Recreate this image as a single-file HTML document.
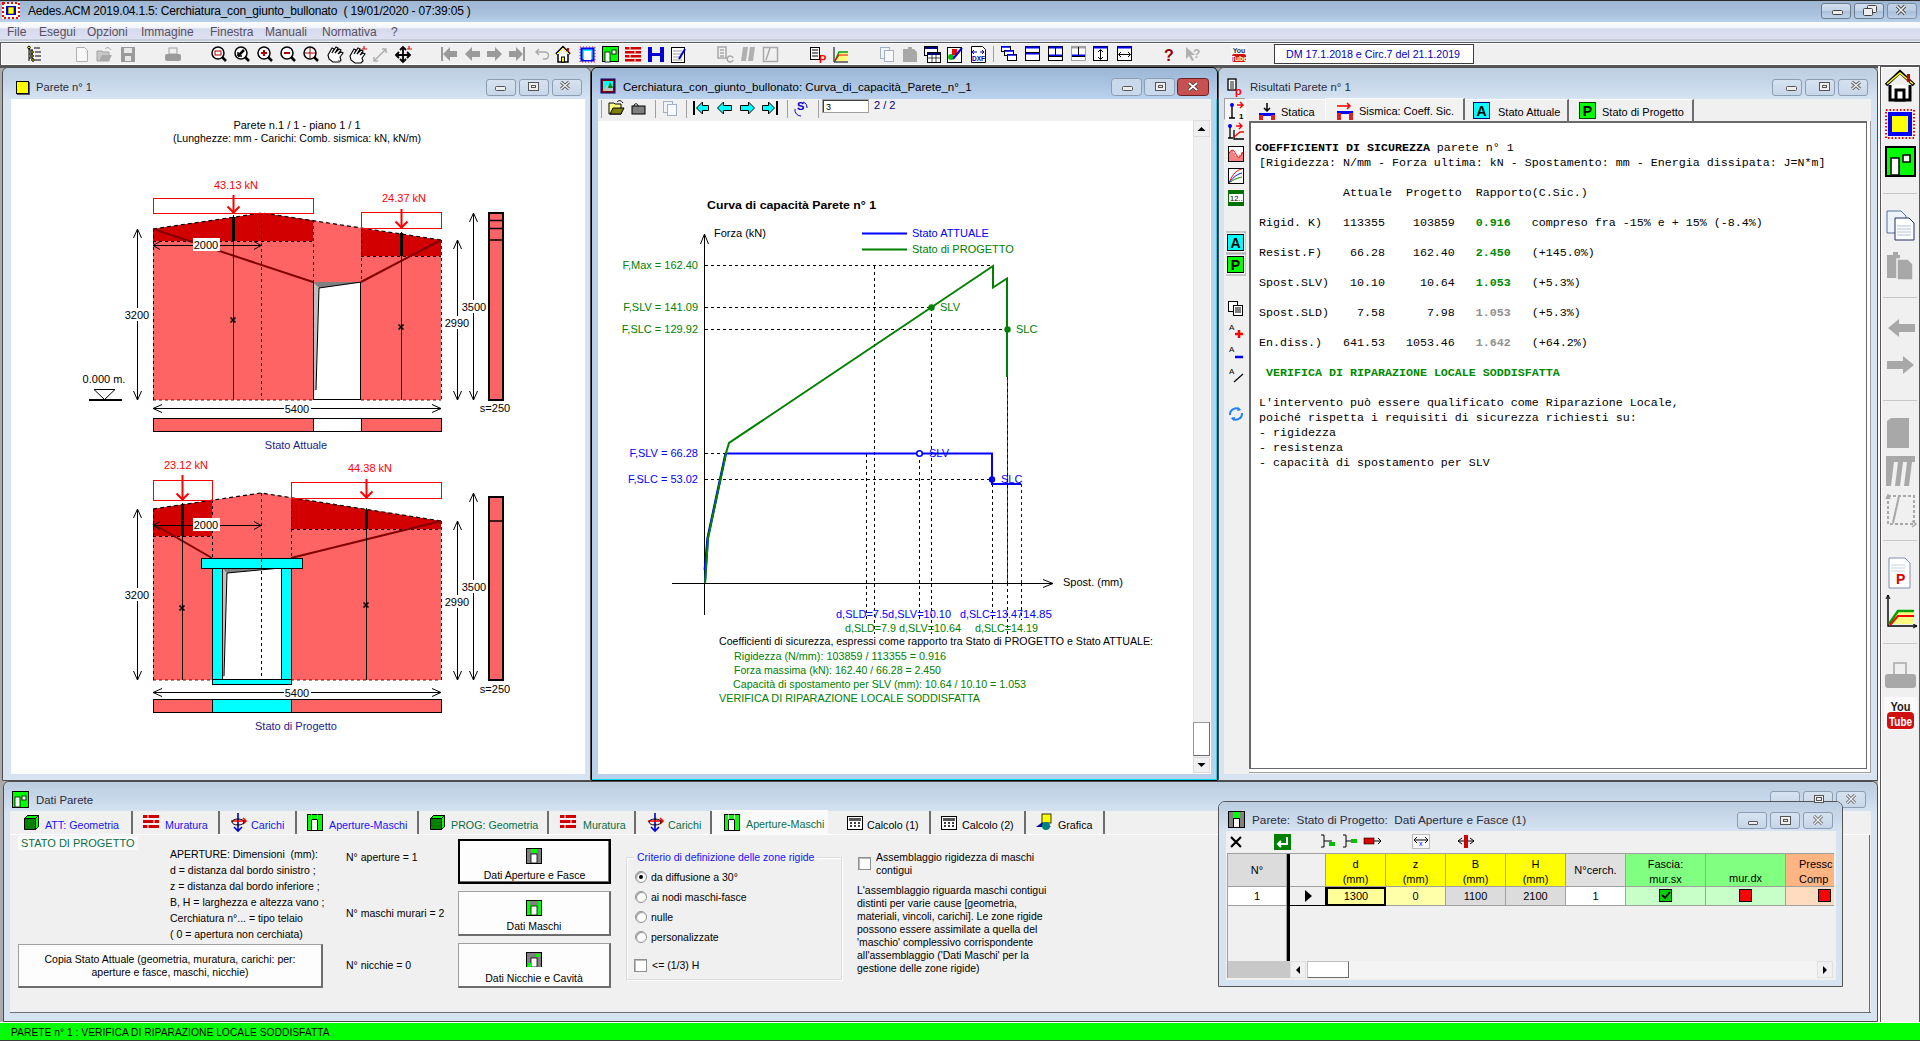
<!DOCTYPE html>
<html><head><meta charset="utf-8">
<style>
*{box-sizing:border-box;margin:0;padding:0}
html,body{width:1920px;height:1041px;overflow:hidden;background:#ababab;font-family:"Liberation Sans",sans-serif;font-size:12px;color:#000}
.a{position:absolute}
.t{position:absolute;white-space:pre;line-height:1}
#title{left:0;top:0;width:1920px;height:22px;background:linear-gradient(#9fb6d3,#a9c1dc 60%,#b9d0ea);border-top:1px solid #2a2a2a}
#menu{left:0;top:22px;width:1920px;height:20px;background:linear-gradient(#fdfdfe 0,#f3f5fa 30%,#d5d9ec 36%,#dfe3f3 100%);border-bottom:1px solid #e8ecf4;box-shadow:inset 0 -2px 0 #c6cbd8}
#tb{left:0;top:42px;width:1920px;height:26px;background:#f0f0f0;border-top:1px solid #5a5a5a;border-left:1px solid #5a5a5a;border-bottom:3px solid #555;box-shadow:inset 1px 1px 0 #fff,inset 0 -1px 0 #fff}
.wbtn{position:absolute;height:16px;border:1px solid #6c7a8e;border-radius:3px;background:linear-gradient(#d3dfee,#c1d2e6 50%,#a9bfda 51%,#c0d3ea)}
.win{position:absolute;background:#d6e3f1;border:1px solid #4d4d4d;border-radius:6px 6px 0 0}
.win .tt{position:absolute;left:0;top:0;right:0;height:31px;border-radius:6px 6px 0 0;background:linear-gradient(#bccde0,#c7d7ea 50%,#d5e3f2)}
.cbtn{position:absolute;width:30px;height:17px;border:1px solid #8c9cb2;border-radius:3px;background:linear-gradient(#d6e2ef,#c7d6e8)}
#status{left:0;top:1022px;width:1920px;height:19px;background:#00ff00;border-top:1px solid #fff;border-bottom:1px solid #3c3c3c}
#rtb{left:1878px;top:66px;width:42px;height:956px;background:#f0f0f0;border-left:2px solid #fff;border-right:1px solid #555;box-shadow:inset 1px 1px 0 #555,inset 2px 2px 0 #fff}
.ttl{font-size:12px;color:#2b2b3b}
</style></head>
<body>
<!-- main title bar -->
<div id="title" class="a">
  <div class="t" style="left:28px;top:4px;font-size:12px;letter-spacing:-0.2px;color:#000">Aedes.ACM 2019.04.1.5: Cerchiatura_con_giunto_bullonato  ( 19/01/2020 - 07:39:05 )</div>
  <div class="wbtn" style="left:1821px;top:2px;width:30px"></div>
  <div class="wbtn" style="left:1854px;top:2px;width:30px"></div>
  <div class="wbtn" style="left:1887px;top:2px;width:30px;opacity:.7"></div>
</div>
<!-- menu -->
<div id="menu" class="a">
  <div class="t" style="left:7px;top:4px;color:#5a5060">File</div>
  <div class="t" style="left:39px;top:4px;color:#5a5060">Esegui</div>
  <div class="t" style="left:87px;top:4px;color:#5a5060">Opzioni</div>
  <div class="t" style="left:141px;top:4px;color:#5a5060">Immagine</div>
  <div class="t" style="left:210px;top:4px;color:#5a5060">Finestra</div>
  <div class="t" style="left:265px;top:4px;color:#5a5060">Manuali</div>
  <div class="t" style="left:322px;top:4px;color:#5a5060">Normativa</div>
  <div class="t" style="left:391px;top:4px;color:#5a5060">?</div>
</div>
<!-- toolbar -->
<div id="tb" class="a"></div>

<!-- window 1: Parete -->
<div class="win" style="left:2px;top:67px;width:589px;height:714px">
  <div class="tt"></div>
  <div class="a" style="left:13px;top:13px;width:13px;height:13px;background:#ff0;border:1px solid #000;box-shadow:1px 1px 0 #555"></div>
  <div class="t ttl" style="left:33px;top:14px;font-size:11.2px">Parete n° 1</div>
  <div class="cbtn" style="left:483px;top:11px"></div>
  <div class="cbtn" style="left:516px;top:11px"></div>
  <div class="cbtn" style="left:549px;top:11px"></div>
  <div class="a" style="left:8px;top:31px;width:574px;height:675px;background:#fff"></div>
</div>

<!-- window 2: chart -->
<div class="win" style="left:591px;top:67px;width:627px;height:714px;background:#b9d1ea;border-color:#000;box-shadow:inset -1px -1px 0 #00e0ff">
  <div class="tt" style="background:linear-gradient(#9cb6d6,#a9c3e2 50%,#bcd3ee)"></div>
  <div class="t ttl" style="left:31px;top:14px;color:#000;font-size:11.55px">Cerchiatura_con_giunto_bullonato: Curva_di_capacità_Parete_n°_1</div>
  <div class="a" style="left:6px;top:31px;width:613px;height:22px;background:#f0f0f0"></div>
  <div class="a" style="left:6px;top:53px;width:613px;height:653px;background:#fff"></div>
</div>

<!-- window 3: Risultati -->
<div class="win" style="left:1218px;top:67px;width:660px;height:714px">
  <div class="tt"></div>
  <div class="t ttl" style="left:31px;top:14px;font-size:11.4px">Risultati Parete n° 1</div>
  <div class="cbtn" style="left:553px;top:11px"></div>
  <div class="cbtn" style="left:586px;top:11px"></div>
  <div class="cbtn" style="left:619px;top:11px"></div>
  <div class="a" style="left:6px;top:31px;width:646px;height:675px;background:#f0f0f0"></div>
  <div class="a" style="left:32px;top:55px;width:616px;height:650px;background:#fff;border:1px solid #6d6d6d"></div>
</div>

<!-- window 4: Dati Parete -->
<div class="win" style="left:3px;top:781px;width:1875px;height:241px">
  <div class="tt" style="height:30px"></div>
  <div class="t ttl" style="left:32px;top:13px;font-size:11.4px">Dati Parete</div>
  <div class="a" style="left:6px;top:29px;width:1861px;height:202px;background:#f0f0f0;border-bottom:1px solid #6d6d6d"></div>
</div>

<svg class="a" style="left:0;top:0" width="1920" height="1041" viewBox="0 0 1920 1041" font-family="Liberation Sans" font-size="11">
<g text-anchor="middle">
<text x="297" y="129">Parete n.1 / 1 - piano 1 / 1</text>
<text x="297" y="142" textLength="248" lengthAdjust="spacingAndGlyphs">(Lunghezze: mm - Carichi: Comb. sismica: kN, kN/m)</text>
</g>
<!-- ===== TOP: Stato Attuale ===== -->
<g>
<!-- wall body pink -->
<polygon points="153,229 262,213 441,240 441,400 361,400 361,282 313,282 313,400 153,400" fill="#ff6464"/>
<!-- opening -->
<rect x="313" y="282" width="48" height="118" fill="#fff"/>
<polygon points="313,282 361,282 360,283 319,288 316,390 313,392" fill="#c0c0c0"/>
<polygon points="313,282 361,282 319,288" fill="#808080"/>
<polyline points="361,282 319,288 316,390" fill="none" stroke="#000" stroke-width="1"/>
<line x1="313.5" y1="282" x2="313.5" y2="400" stroke="#000"/>
<line x1="360.5" y1="282" x2="360.5" y2="400" stroke="#000"/>
<line x1="313" y1="399.5" x2="361" y2="399.5" stroke="#000"/>
<!-- dark red bands -->
<polygon points="153,229 262,213 313,220.6 313,241 153,241" fill="#d20000"/>
<polygon points="361,228.5 441,240 441,256 361,256" fill="#d20000"/>
<!-- roof dashed -->
<polyline points="153,229 262,213 441,240" fill="none" stroke="#000" stroke-width="1.2" stroke-dasharray="4,3"/>
<!-- dashed lines -->
<g stroke="#000" stroke-width="1" stroke-dasharray="3,3" fill="none">
<line x1="153.5" y1="229" x2="153.5" y2="400"/>
<line x1="261.5" y1="213" x2="261.5" y2="400"/>
<line x1="313.5" y1="220" x2="313.5" y2="282"/>
<line x1="361.5" y1="228" x2="361.5" y2="282"/>
<line x1="441.5" y1="240" x2="441.5" y2="400"/>
<line x1="153" y1="241.5" x2="313" y2="241.5"/>
<line x1="361" y1="256.5" x2="441" y2="256.5"/>
<line x1="153" y1="400" x2="313" y2="400" stroke="#800000"/>
<line x1="361" y1="400" x2="441" y2="400" stroke="#800000"/>
</g>
<!-- diagonals -->
<line x1="153" y1="229" x2="313" y2="282" stroke="#800000" stroke-width="2"/>
<line x1="361" y1="282" x2="441" y2="240" stroke="#800000" stroke-width="2"/>
<!-- pier axes -->
<line x1="233.5" y1="215" x2="233.5" y2="400" stroke="#000"/>
<line x1="233.5" y1="217" x2="233.5" y2="241" stroke="#000" stroke-width="3"/>
<line x1="401.5" y1="232" x2="401.5" y2="400" stroke="#000"/>
<line x1="401.5" y1="233" x2="401.5" y2="256" stroke="#000" stroke-width="3"/>
<g stroke="#000" stroke-width="1.6"><path d="M230.5,317.5l5,5m0,-5l-5,5"/><path d="M398.5,324.5l5,5m0,-5l-5,5"/></g>
<!-- loads -->
<rect x="153.5" y="198.5" width="160" height="15" fill="none" stroke="#ff0000"/>
<rect x="361.5" y="212.5" width="80" height="16" fill="none" stroke="#ff0000"/>
<g stroke="#ff0000" stroke-width="2" fill="none">
<line x1="233.5" y1="195" x2="233.5" y2="213"/><path d="M227.5,206.5l6,6l6,-6"/>
<line x1="401.5" y1="209" x2="401.5" y2="228"/><path d="M395.5,221.5l6,6l6,-6"/>
</g>
<text x="236" y="189" fill="#ff0000" text-anchor="middle">43.13 kN</text>
<text x="404" y="202" fill="#ff0000" text-anchor="middle">24.37 kN</text>
<!-- dim 2000 -->
<g stroke="#000" fill="none"><line x1="153" y1="245.5" x2="261" y2="245.5"/><path d="M160,241.5l-7,4l7,4M254,241.5l7,4l-7,4"/></g>
<rect x="193" y="238" width="27" height="13" fill="#fff"/>
<text x="206" y="249" text-anchor="middle">2000</text>
<!-- vertical dims -->
<g stroke="#000" fill="none">
<line x1="137.5" y1="229" x2="137.5" y2="400"/><path d="M133.5,238l4,-9l4,9M133.5,391l4,9l4,-9"/>
<line x1="457.5" y1="240" x2="457.5" y2="400"/><path d="M453.5,249l4,-9l4,9M453.5,391l4,9l4,-9"/>
<line x1="473.5" y1="213" x2="473.5" y2="400"/><path d="M469.5,222l4,-9l4,9M469.5,391l4,9l4,-9"/>
</g>
<rect x="124" y="308" width="26" height="13" fill="#fff"/>
<text x="137" y="319" text-anchor="middle">3200</text>
<rect x="444" y="316" width="27" height="13" fill="#fff"/>
<text x="457" y="327" text-anchor="middle">2990</text>
<rect x="461" y="300" width="26" height="13" fill="#fff"/>
<text x="474" y="311" text-anchor="middle">3500</text>
<!-- side section -->
<rect x="489" y="213" width="14" height="187" fill="#ff6464" stroke="#000" stroke-width="2"/>
<g stroke="#000" stroke-width="1.5"><line x1="489" y1="220.5" x2="503" y2="220.5"/><line x1="489" y1="228.5" x2="503" y2="228.5"/><line x1="489" y1="240" x2="503" y2="240"/></g>
<text x="495" y="412" text-anchor="middle">s=250</text>
<!-- ground -->
<text x="104" y="383" text-anchor="middle">0.000 m.</text>
<path d="M94,389.5h21l-10.5,10z" fill="none" stroke="#000"/>
<line x1="89" y1="400" x2="122" y2="400" stroke="#000" stroke-width="2"/>
<!-- dim 5400 -->
<g stroke="#000" fill="none"><line x1="153" y1="408.5" x2="441" y2="408.5"/><path d="M162,404.5l-9,4l9,4M432,404.5l9,4l-9,4"/></g>
<rect x="284" y="402" width="27" height="13" fill="#fff"/>
<text x="297" y="413" text-anchor="middle">5400</text>
<!-- plan strip -->
<rect x="153.5" y="418.5" width="288" height="13" fill="#ff6464" stroke="#000"/>
<rect x="314" y="419" width="47" height="12" fill="#fff"/>
<line x1="313.5" y1="418" x2="313.5" y2="432" stroke="#000"/><line x1="361.5" y1="418" x2="361.5" y2="432" stroke="#000"/>
<text x="296" y="449" text-anchor="middle" fill="#1c1c8c">Stato Attuale</text>
</g>

<!-- ===== BOTTOM: Stato di Progetto ===== -->
<g>
<polygon points="153,509 261,493 441,521 441,680 153,680" fill="#ff6464"/>
<polygon points="153,509 212,500.3 212,536 153,536" fill="#d20000"/>
<polygon points="291,497.7 441,521 441,529 291,529" fill="#d20000"/>
<polyline points="153,509 261,493 441,521" fill="none" stroke="#000" stroke-width="1.2" stroke-dasharray="4,3"/>
<g stroke="#000" stroke-width="1" stroke-dasharray="3,3" fill="none">
<line x1="153.5" y1="509" x2="153.5" y2="680"/>
<line x1="212.5" y1="500" x2="212.5" y2="558"/>
<line x1="291.5" y1="505" x2="291.5" y2="558"/>
<line x1="441.5" y1="521" x2="441.5" y2="680"/>
<line x1="153" y1="536.5" x2="212" y2="536.5"/>
<line x1="291" y1="529.5" x2="441" y2="529.5"/>
<line x1="153" y1="680" x2="441" y2="680" stroke="#800000"/>
</g>
<line x1="153" y1="524" x2="212" y2="558" stroke="#800000" stroke-width="2"/>
<line x1="291" y1="558" x2="441" y2="521" stroke="#800000" stroke-width="2"/>
<!-- frame -->
<rect x="222" y="568" width="59" height="112" fill="#fff"/>
<polygon points="222,568 281,568 227,573 224,676 222,678" fill="#c0c0c0"/>
<polygon points="222,568 281,568 227,573" fill="#808080"/>
<polyline points="281,568 227,573 224,676" fill="none" stroke="#000"/>
<g fill="#00ffff" stroke="#000" stroke-width="1">
<rect x="201.5" y="558.5" width="101" height="10"/>
<rect x="212.5" y="568.5" width="10" height="112"/>
<rect x="281.5" y="568.5" width="10" height="112"/>
<rect x="212.5" y="679.5" width="79" height="5"/>
</g>
<line x1="261.5" y1="493" x2="261.5" y2="680" stroke="#000" stroke-dasharray="3,3"/>
<line x1="182.5" y1="503" x2="182.5" y2="680" stroke="#000"/>
<line x1="182.5" y1="505" x2="182.5" y2="536" stroke="#000" stroke-width="3"/>
<line x1="366.5" y1="508" x2="366.5" y2="680" stroke="#000"/>
<line x1="366.5" y1="510" x2="366.5" y2="529" stroke="#000" stroke-width="3"/>
<g stroke="#000" stroke-width="1.6"><path d="M179.5,605.5l5,5m0,-5l-5,5"/><path d="M363.5,602.5l5,5m0,-5l-5,5"/></g>
<rect x="153.5" y="480.5" width="59" height="20" fill="none" stroke="#ff0000"/>
<rect x="291.5" y="482.5" width="150" height="16" fill="none" stroke="#ff0000"/>
<g stroke="#ff0000" stroke-width="2" fill="none">
<line x1="182.5" y1="475" x2="182.5" y2="500"/><path d="M176.5,493.5l6,6l6,-6"/>
<line x1="366.5" y1="479" x2="366.5" y2="498"/><path d="M360.5,491.5l6,6l6,-6"/>
</g>
<text x="186" y="469" fill="#ff0000" text-anchor="middle">23.12 kN</text>
<text x="370" y="472" fill="#ff0000" text-anchor="middle">44.38 kN</text>
<g stroke="#000" fill="none"><line x1="153" y1="525.5" x2="261" y2="525.5"/><path d="M160,521.5l-7,4l7,4M254,521.5l7,4l-7,4"/></g>
<rect x="193" y="518" width="27" height="13" fill="#fff"/>
<text x="206" y="529" text-anchor="middle">2000</text>
<g stroke="#000" fill="none">
<line x1="137.5" y1="509" x2="137.5" y2="680"/><path d="M133.5,518l4,-9l4,9M133.5,671l4,9l4,-9"/>
<line x1="457.5" y1="521" x2="457.5" y2="680"/><path d="M453.5,530l4,-9l4,9M453.5,671l4,9l4,-9"/>
<line x1="473.5" y1="493" x2="473.5" y2="680"/><path d="M469.5,502l4,-9l4,9M469.5,671l4,9l4,-9"/>
</g>
<rect x="124" y="588" width="26" height="13" fill="#fff"/>
<text x="137" y="599" text-anchor="middle">3200</text>
<rect x="444" y="595" width="27" height="13" fill="#fff"/>
<text x="457" y="606" text-anchor="middle">2990</text>
<rect x="461" y="580" width="26" height="13" fill="#fff"/>
<text x="474" y="591" text-anchor="middle">3500</text>
<rect x="489" y="497" width="14" height="183" fill="#ff6464" stroke="#000" stroke-width="2"/>
<line x1="489" y1="521" x2="503" y2="521" stroke="#000" stroke-width="1.5"/>
<text x="495" y="693" text-anchor="middle">s=250</text>
<g stroke="#000" fill="none"><line x1="153" y1="692.5" x2="441" y2="692.5"/><path d="M162,688.5l-9,4l9,4M432,688.5l9,4l-9,4"/></g>
<rect x="284" y="686" width="27" height="13" fill="#fff"/>
<text x="297" y="697" text-anchor="middle">5400</text>
<rect x="153.5" y="699.5" width="288" height="13" fill="#ff6464" stroke="#000"/>
<rect x="212.5" y="699.5" width="79" height="13" fill="#00ffff" stroke="#000"/>
<text x="296" y="730" text-anchor="middle" fill="#1c1c8c">Stato di Progetto</text>
</g>
</svg>

<svg class="a" style="left:0;top:0" width="1920" height="1041" viewBox="0 0 1920 1041" font-family="Liberation Sans" font-size="11">
<text x="707" y="209" font-weight="bold" font-size="11.5" textLength="169" lengthAdjust="spacingAndGlyphs">Curva di capacità Parete n° 1</text>
<text x="714" y="237">Forza (kN)</text>
<g stroke="#000" fill="none">
<line x1="704.5" y1="234" x2="704.5" y2="615"/><path d="M700.5,244l4,-10l4,10"/>
<line x1="672" y1="583.5" x2="1053" y2="583.5"/><path d="M1043,579.5l10,4l-10,4"/>
</g>
<text x="1063" y="586">Spost. (mm)</text>
<!-- legend -->
<line x1="862" y1="233.5" x2="907" y2="233.5" stroke="#0000ff" stroke-width="2"/>
<line x1="862" y1="249.5" x2="907" y2="249.5" stroke="#008000" stroke-width="2"/>
<text x="912" y="237" fill="#0000ff">Stato ATTUALE</text>
<text x="912" y="253" fill="#008000">Stato di PROGETTO</text>
<!-- F labels -->
<g fill="#008000" text-anchor="end">
<text x="698" y="269">F,Max = 162.40</text>
<text x="698" y="311">F,SLV = 141.09</text>
<text x="698" y="333">F,SLC = 129.92</text>
</g>
<g fill="#0000ff" text-anchor="end">
<text x="698" y="457">F,SLV = 66.28</text>
<text x="698" y="483">F,SLC = 53.02</text>
</g>
<!-- dashed grid -->
<g stroke="#000" stroke-dasharray="3,3" fill="none">
<line x1="705" y1="265.5" x2="993" y2="265.5"/>
<line x1="705" y1="307.5" x2="931" y2="307.5"/>
<line x1="705" y1="329.5" x2="1007" y2="329.5"/>
<line x1="705" y1="453.5" x2="726" y2="453.5"/>
<line x1="705" y1="479.5" x2="992" y2="479.5"/>
<line x1="874.5" y1="266" x2="874.5" y2="634"/>
<line x1="931.5" y1="308" x2="931.5" y2="634"/>
<line x1="866.5" y1="454" x2="866.5" y2="620"/>
<line x1="919.5" y1="454" x2="919.5" y2="620"/>
<line x1="992.5" y1="484" x2="992.5" y2="620"/><line x1="1007.5" y1="583" x2="1007.5" y2="634"/><line x1="1021.5" y1="583" x2="1021.5" y2="620"/>
</g>
<line x1="1007.5" y1="377" x2="1007.5" y2="583" stroke="#008000"/><line x1="1007.5" y1="377" x2="1007.5" y2="583" stroke="#000" stroke-dasharray="3,3"/>
<line x1="1021.5" y1="484" x2="1021.5" y2="583" stroke="#0000ff" stroke-dasharray="3,3"/>
<!-- curves -->
<polyline points="705,583 708,538 726,453.5 992,453.5 992,484 1021,484" fill="none" stroke="#0000ff" stroke-width="2"/>
<polyline points="704.4,570 707.2,538 725.2,453.5" fill="none" stroke="#0000ff" stroke-width="1.6"/>
<polyline points="705,583 708,538 726,453 729,443 993,266 993,287.5 1007,278.5 1007,377" fill="none" stroke="#008000" stroke-width="2"/>
<circle cx="919.5" cy="453.5" r="2.8" fill="#fff" stroke="#0000ff" stroke-width="1.6"/>
<circle cx="992" cy="479.5" r="3.2" fill="#0000ff"/>
<circle cx="931.5" cy="307.5" r="3.2" fill="#008000"/>
<circle cx="1007.5" cy="329.5" r="3.2" fill="#008000"/>
<text x="940" y="311" fill="#008000">SLV</text>
<text x="1016" y="333" fill="#008000">SLC</text>
<text x="929" y="457" fill="#0000ff">SLV</text>
<text x="1001" y="483" fill="#0000ff">SLC</text>
<!-- d labels -->
<g fill="#0000ff">
<text x="836" y="618" textLength="115" lengthAdjust="spacingAndGlyphs">d,SLD=7.5d,SLV=10.10</text>
<text x="960" y="618" textLength="63" lengthAdjust="spacingAndGlyphs">d,SLC=13.47</text>
<text x="1023" y="618" textLength="29" lengthAdjust="spacingAndGlyphs">14.85</text>
</g>
<g fill="#008000">
<text x="845" y="632" textLength="51" lengthAdjust="spacingAndGlyphs">d,SLD=7.9</text>
<text x="899" y="632" textLength="62" lengthAdjust="spacingAndGlyphs">d,SLV=10.64</text>
<text x="975" y="632" textLength="63" lengthAdjust="spacingAndGlyphs">d,SLC=14.19</text>
</g>
<text x="719" y="645" textLength="434" lengthAdjust="spacingAndGlyphs">Coefficienti di sicurezza, espressi come rapporto tra Stato di PROGETTO e Stato ATTUALE:</text>
<g fill="#008000">
<text x="734" y="660" textLength="212" lengthAdjust="spacingAndGlyphs">Rigidezza (N/mm): 103859 / 113355 = 0.916</text>
<text x="734" y="674" textLength="207" lengthAdjust="spacingAndGlyphs">Forza massima (kN): 162.40 / 66.28 = 2.450</text>
<text x="733" y="688" textLength="293" lengthAdjust="spacingAndGlyphs">Capacità di spostamento per SLV (mm): 10.64 / 10.10 = 1.053</text>
<text x="719" y="702" textLength="261" lengthAdjust="spacingAndGlyphs">VERIFICA DI RIPARAZIONE LOCALE SODDISFATTA</text>
</g>
</svg>
<!-- chart toolbar & scrollbar -->
<div class="a" style="left:1193px;top:120px;width:17px;height:653px;background:#f0f0f0;border-left:1px solid #e6e6e6"></div>
<div class="a" style="left:1193px;top:120px;width:17px;height:17px;background:#f0f0f0;border:1px solid #dcdcdc"><svg width="15" height="15" style="position:absolute;left:0;top:0"><path d="M3.5,10l4,-4l4,4z" fill="#000"/></svg></div>
<div class="a" style="left:1193px;top:722px;width:17px;height:34px;background:#fff;border:1px solid #999;border-right-color:#6d6d6d;border-bottom-color:#6d6d6d"></div>
<div class="a" style="left:1193px;top:757px;width:17px;height:16px;background:#f0f0f0;border:1px solid #dcdcdc"><svg width="15" height="15" style="position:absolute;left:0;top:0"><path d="M3.5,5l4,4l4,-4z" fill="#000"/></svg></div>

<style>
.mono{position:absolute;font-family:"Liberation Mono",monospace;font-size:11.67px;line-height:15px;white-space:pre;color:#000}
.tab{position:absolute;height:22px;background:#f0f0f0;border-right:2px solid #6d6d6d;font-size:11px;white-space:pre}
.tab span{position:absolute;top:6px}
.ico{position:absolute}
</style>
<!-- results tab strip -->
<div class="a" style="left:1224px;top:98px;width:22px;height:676px;background:#f0f0f0"></div>
<div class="a" style="left:1224px;top:98px;width:22px;height:22px;background:#f6f6f6;border-left:1px solid #a0a0a0;border-top:1px solid #a0a0a0;border-right:1px solid #fff;border-bottom:1px solid #fff"></div>
<div class="tab" style="left:1249px;top:99px;width:76px;border-right:none;border-top:1px solid #fff"><span style="left:32px">Statica</span></div>
<div class="tab" style="left:1325px;top:98px;width:140px;background:#f2f2f2;border-top:1px solid #fff;border-left:1px solid #fff"><span style="left:33px">Sismica: Coeff. Sic.</span></div>
<div class="tab" style="left:1465px;top:99px;width:104px;border-top:1px solid #fff"><span style="left:33px">Stato Attuale</span></div>
<div class="tab" style="left:1569px;top:99px;width:125px;border-top:1px solid #fff"><span style="left:33px">Stato di Progetto</span></div>
<!-- icons in tabs -->
<svg class="ico" style="left:1258px;top:102px" width="18" height="18"><path d="M9,1v8M6,6l3,3l3,-3" stroke="#000" fill="none" stroke-width="1.5"/><rect x="1" y="11" width="16" height="3" fill="#00f"/><rect x="1" y="13" width="4" height="5" fill="#d22"/><rect x="13" y="13" width="4" height="5" fill="#d22"/></svg>
<svg class="ico" style="left:1336px;top:102px" width="18" height="18"><path d="M1,4h13M11,1l3,3l-3,3" stroke="#f00" fill="none" stroke-width="1.5"/><rect x="1" y="9" width="16" height="3" fill="#00f"/><rect x="1" y="11" width="4" height="7" fill="#d22"/><rect x="13" y="11" width="4" height="7" fill="#d22"/></svg>
<svg class="ico" style="left:1473px;top:102px" width="17" height="17"><rect x="0.5" y="0.5" width="16" height="16" fill="#00ffff" stroke="#000080"/><text x="8.5" y="14" font-family="Liberation Sans" font-weight="bold" font-size="14" text-anchor="middle">A</text></svg>
<svg class="ico" style="left:1579px;top:102px" width="17" height="17"><rect x="0.5" y="0.5" width="16" height="16" fill="#00ff00" stroke="#004000"/><text x="8.5" y="14" font-family="Liberation Sans" font-weight="bold" font-size="14" text-anchor="middle">P</text></svg>
<!-- left tool column icons -->
<svg class="ico" style="left:1226px;top:100px" width="20" height="340" font-family="Liberation Sans">
 <g stroke="#000" stroke-width="1.4" fill="none"><path d="M6,5v13M3,18h6"/><path d="M11,5h6M14,2l3,3l-3,3" stroke="#f00"/></g><circle cx="6" cy="5" r="2" fill="#00f"/><text x="13" y="19" font-size="8" font-weight="bold">1</text>
 <g transform="translate(0,22)"><g stroke="#000" stroke-width="1.3" fill="none"><path d="M4,4v12M2,16h5M8,8v9h10"/><path d="M8,15l6,-5h4" stroke="#f00"/><path d="M10,4h6M13,1l3,3l-3,3" stroke="#f00"/></g><circle cx="4" cy="4" r="2" fill="#00f"/></g>
 <g transform="translate(0,44)"><rect x="2.5" y="2.5" width="15" height="15" fill="#fff" stroke="#000"/><path d="M4,17v-9M6,17v-10M8,17v-8M10,17v-5M12,17v-4M14,17v-6M16,17v-9M3,9c3,-5 5,-3 8,3c2,3 4,0 6,-4" stroke="#e00" fill="none"/></g>
 <g transform="translate(0,66)"><rect x="2.5" y="2.5" width="15" height="15" fill="#fff" stroke="#000"/><path d="M3,17c4,-10 8,-13 13,-14" stroke="#f00" fill="none"/><path d="M3,17c5,-7 9,-9 13,-10" stroke="#00f" fill="none"/><path d="M3,17c5,-4 9,-5 13,-6" stroke="#080" fill="none"/></g>
 <g transform="translate(0,88)"><rect x="2" y="2" width="16" height="16" fill="#007000"/><rect x="3" y="6" width="14" height="8" fill="#fff"/><text x="4" y="13" font-size="7.5">12..</text></g>
 <g transform="translate(-2,132)"><rect x="1" y="0" width="21" height="21" fill="#f6f6f6" stroke="#a0a0a0"/><rect x="3.5" y="2.5" width="16" height="16" fill="#00ffff" stroke="#000"/><text x="11.5" y="16" font-size="14" font-weight="bold" text-anchor="middle">A</text></g>
 <g transform="translate(-2,154)"><rect x="1" y="0" width="21" height="21" fill="#f6f6f6" stroke="#a0a0a0"/><rect x="3.5" y="2.5" width="16" height="16" fill="#00ff00" stroke="#000"/><text x="11.5" y="16" font-size="14" font-weight="bold" text-anchor="middle">P</text></g>
 <g transform="translate(0,198)"><rect x="2.5" y="3.5" width="9" height="10" fill="#fff" stroke="#000"/><rect x="7.5" y="7.5" width="9" height="10" fill="#fff" stroke="#000"/><path d="M9,10h6M9,12h6M9,14h6" stroke="#000"/></g>
 <g transform="translate(0,220)"><text x="3" y="10" font-size="8">A</text><path d="M9,14h8M13,10v8" stroke="#f00" stroke-width="2.5"/></g>
 <g transform="translate(0,242)"><text x="3" y="10" font-size="8">A</text><path d="M9,15h8" stroke="#00f" stroke-width="2.5"/></g>
 <g transform="translate(0,264)"><text x="3" y="10" font-size="8">A</text><path d="M8,18l9,-8" stroke="#000" stroke-width="1.2"/></g>
 <g transform="translate(0,304)"><path d="M4,11a6,6 0 0 1 10,-5M16,9a6,6 0 0 1 -10,5" stroke="#2080ff" stroke-width="2" fill="none"/><path d="M12,3l3,3l-4,1zM8,17l-3,-3l4,-1z" fill="#2080ff"/></g>
</svg>
<!-- text area -->
<div class="a" style="left:1249px;top:121px;width:622px;height:652px;background:#fff;border-right:1px solid #a0a0a0;border-bottom:1px solid #a0a0a0"></div><div class="a" style="left:1249px;top:121px;width:618px;height:648px;background:#fff;border:1px solid #696969;border-top:2px solid #696969;border-left:2px solid #696969"></div>
<div class="mono" style="left:1255px;top:141px"><b>COEFFICIENTI DI SICUREZZA</b> parete n° 1</div>
<div class="mono" style="left:1259px;top:156px">[Rigidezza: N/mm - Forza ultima: kN - Spostamento: mm - Energia dissipata: J=N*m]

            Attuale  Progetto  Rapporto(C.Sic.)

Rigid. K)   113355    103859   <b style="color:#008a00">0.916</b>   compreso fra -15% e + 15% (-8.4%)

Resist.F)    66.28    162.40   <b style="color:#008a00">2.450</b>   (+145.0%)

Spost.SLV)   10.10     10.64   <b style="color:#008a00">1.053</b>   (+5.3%)

Spost.SLD)    7.58      7.98   <b style="color:#909090">1.053</b>   (+5.3%)

En.diss.)   641.53   1053.46   <b style="color:#909090">1.642</b>   (+64.2%)

 <b style="color:#008a00">VERIFICA DI RIPARAZIONE LOCALE SODDISFATTA</b>

L'intervento può essere qualificato come Riparazione Locale,
poiché rispetta i requisiti di sicurezza richiesti su:
- rigidezza
- resistenza
- capacità di spostamento per SLV</div>

<style>
.dt{position:absolute;height:23px;top:811px;font-size:10.7px;white-space:pre;border-right:2px solid #6d6d6d}
.dt span{position:absolute;top:8px}
.lbl{position:absolute;font-size:10.5px;white-space:pre;line-height:1}
.btn{position:absolute;background:#fdfdfd;border:1px solid #a0a0a0;border-right:2px solid #6d6d6d;border-bottom:2px solid #6d6d6d;font-size:10.5px;text-align:center;white-space:pre}
.rad{position:absolute;width:12px;height:12px;border-radius:50%;background:#fff;border:1px solid #8e8f8f;box-shadow:inset 1px 1px 1px #999}
.chk{position:absolute;width:13px;height:13px;background:#fff;border:1px solid #8e8f8f;box-shadow:inset 1px 1px 0 #bbb}
</style>
<!-- Dati Parete title icon -->
<svg class="a" style="left:12px;top:791px" width="17" height="17"><rect x="0.5" y="0.5" width="16" height="16" fill="#00ff00" stroke="#000"/><rect x="3" y="6" width="5" height="10" fill="#fff" stroke="#000" stroke-width=".8"/><rect x="10" y="5" width="4" height="4" fill="#fff" stroke="#000" stroke-width=".8"/></svg>
<!-- Dati Parete window buttons (partially hidden) -->
<div class="cbtn" style="left:1770px;top:791px"></div>
<div class="cbtn" style="left:1803px;top:791px"></div>
<div class="cbtn" style="left:1836px;top:791px"><svg width="28" height="15" style="position:absolute;left:0;top:0"><path d="M10,3l8,8M18,3l-8,8" stroke="#555" stroke-width="3"/><path d="M10,3l8,8M18,3l-8,8" stroke="#eee" stroke-width="1.5"/></svg></div>
<!-- tab strip -->
<div class="a" style="left:10px;top:834px;width:1860px;height:1px;background:#fff"></div>
<div class="dt" style="left:13px;width:120px;color:#1414ff"><span style="left:32px">ATT: Geometria</span></div>
<div class="dt" style="left:133px;width:87px;color:#1414ff"><span style="left:32px">Muratura</span></div>
<div class="dt" style="left:220px;width:77px;color:#1414ff"><span style="left:31px">Carichi</span></div>
<div class="dt" style="left:297px;width:122px;color:#1414ff"><span style="left:32px">Aperture-Maschi</span></div>
<div class="dt" style="left:419px;width:130px;color:#0a6e46"><span style="left:32px">PROG: Geometria</span></div>
<div class="dt" style="left:549px;width:87px;color:#0a6e46"><span style="left:34px">Muratura</span></div>
<div class="dt" style="left:636px;width:76px;color:#0a6e46"><span style="left:32px">Carichi</span></div>
<div class="dt" style="left:712px;width:116px;color:#0a6e46;background:#fafafa;border-right:none;top:810px;height:25px"><span style="left:34px;top:8px">Aperture-Maschi</span></div>
<div class="dt" style="left:828px;width:103px"><span style="left:39px">Calcolo (1)</span></div>
<div class="dt" style="left:931px;width:95px"><span style="left:31px">Calcolo (2)</span></div>
<div class="dt" style="left:1026px;width:79px"><span style="left:32px">Grafica</span></div>
<!-- tab icons -->
<svg class="a" style="left:0;top:810px" width="1110" height="24">
 <g id="cube"><path d="M24.5,8.5l3,-3h11v11l-3,3h-11z" fill="#008000" stroke="#000"/><path d="M24.5,8.5h11v11M35.5,8.5l3,-3" fill="none" stroke="#000"/><path d="M27.5,5.5h11l-3,3h-11z" fill="#00ff00" stroke="#000"/><path d="M38.5,5.5v11l-3,3v-11z" fill="#00ff00" stroke="#000"/></g>
 <g transform="translate(406,0)"><path d="M24.5,8.5l3,-3h11v11l-3,3h-11z" fill="#008000" stroke="#000"/><path d="M27.5,5.5h11l-3,3h-11z" fill="#00ff00" stroke="#000"/><path d="M38.5,5.5v11l-3,3v-11z" fill="#00ff00" stroke="#000"/></g>
 <g id="brick" fill="#d00000"><rect x="143" y="5" width="16" height="3"/><rect x="143" y="10" width="16" height="3"/><rect x="143" y="15" width="16" height="3"/><path d="M148,5v3M154,10v3M148,15v3" stroke="#fff"/></g>
 <g transform="translate(417,0)" fill="#d00000"><rect x="143" y="5" width="16" height="3"/><rect x="143" y="10" width="16" height="3"/><rect x="143" y="15" width="16" height="3"/><path d="M148,5v3M154,10v3M148,15v3" stroke="#fff"/></g>
 <g><path d="M238,3v18M234,17l4,4l4,-4" stroke="#0000d0" stroke-width="1.6" fill="none"/><path d="M231,11h15M243,8l3,3l-3,3" stroke="#f00" stroke-width="1.6" fill="none"/><ellipse cx="238" cy="12" rx="6" ry="3" fill="none" stroke="#000"/></g>
 <g transform="translate(417,0)"><path d="M238,3v18M234,17l4,4l4,-4" stroke="#0000d0" stroke-width="1.6" fill="none"/><path d="M231,11h15M243,8l3,3l-3,3" stroke="#f00" stroke-width="1.6" fill="none"/><ellipse cx="238" cy="12" rx="6" ry="3" fill="none" stroke="#000"/></g>
 <g><rect x="307.5" y="4.5" width="15" height="16" fill="#00ff00" stroke="#000"/><rect x="311.5" y="9.5" width="6" height="11" fill="#fff" stroke="#000"/><path d="M311.5,4.5v5M317.5,4.5v5" stroke="#fff"/></g>
 <g transform="translate(417,0)"><rect x="307.5" y="4.5" width="15" height="16" fill="#00ff00" stroke="#000"/><rect x="311.5" y="9.5" width="6" height="11" fill="#fff" stroke="#000"/><path d="M311.5,4.5v5M317.5,4.5v5" stroke="#fff"/></g>
 <g><rect x="847.5" y="6.5" width="15" height="13" fill="#fff" stroke="#000"/><rect x="849" y="8" width="12" height="3" fill="#555"/><path d="M850,13h2M854,13h2M858,13h2M850,16h2M854,16h2M858,16h2" stroke="#000" stroke-width="1.5"/></g>
 <g transform="translate(94,0)"><rect x="847.5" y="6.5" width="15" height="13" fill="#fff" stroke="#000"/><rect x="849" y="8" width="12" height="3" fill="#555"/><path d="M850,13h2M854,13h2M858,13h2M850,16h2M854,16h2M858,16h2" stroke="#000" stroke-width="1.5"/></g>
 <g><path d="M1036,17l8,-6l7,6z" fill="#0000a0"/><rect x="1042" y="4" width="9" height="9" fill="#ffff00" stroke="#000" stroke-width=".8"/><circle cx="1046" cy="16" r="4" fill="#008080"/></g>
</svg>
<!-- page content -->
<div class="lbl" style="left:18px;top:836px;width:120px;height:14px;background:#fafafa"></div>
<div class="lbl" style="left:21px;top:838px;color:#0a6e46;font-size:11px">STATO DI PROGETTO</div>
<div class="lbl" style="left:170px;top:846px;line-height:16px;font-size:10.5px">APERTURE: Dimensioni  (mm):
d = distanza dal bordo sinistro ;
z = distanza dal bordo inferiore ;
B, H = larghezza e altezza vano ;
Cerchiatura n°... = tipo telaio
( 0 = apertura non cerchiata)</div>
<div class="lbl" style="left:346px;top:852px">N° aperture = 1</div>
<div class="lbl" style="left:346px;top:908px">N° maschi murari = 2</div>
<div class="lbl" style="left:346px;top:960px">N° nicchie = 0</div>
<div class="btn" style="left:18px;top:944px;width:305px;height:44px;line-height:13px;padding-top:8px">Copia Stato Attuale (geometria, muratura, carichi: per:
aperture e fasce, maschi, nicchie)</div>
<div class="btn" style="left:458px;top:839px;width:153px;height:45px;border:2px solid #000;box-shadow:inset -1px -1px 0 #6d6d6d;padding-top:28px">Dati Aperture e Fasce</div>
<div class="btn" style="left:458px;top:891px;width:153px;height:45px;padding-top:28px">Dati Maschi</div>
<div class="btn" style="left:458px;top:943px;width:153px;height:45px;padding-top:28px">Dati Nicchie e Cavità</div>
<svg class="a" style="left:525px;top:847px" width="18" height="120">
 <rect x="1.5" y="1.5" width="15" height="15" fill="#808080" stroke="#000"/><rect x="6" y="7" width="6" height="9" fill="#fff" stroke="#000" stroke-width=".8"/><rect x="6" y="2" width="6" height="4" fill="#00ff00"/>
 <g transform="translate(0,52)"><rect x="1.5" y="1.5" width="15" height="15" fill="#00ff00" stroke="#000"/><rect x="6" y="7" width="6" height="9" fill="#fff" stroke="#000" stroke-width=".8"/><rect x="5" y="2" width="8" height="4" fill="#808080"/></g>
 <g transform="translate(0,104)"><rect x="1.5" y="1.5" width="15" height="15" fill="#808080" stroke="#000"/><rect x="6" y="7" width="6" height="9" fill="#fff" stroke="#000" stroke-width=".8"/><rect x="11" y="3" width="4" height="3" fill="#00ff00"/><rect x="3" y="12" width="3" height="4" fill="#00ff00"/></g>
</svg>
<!-- groupbox -->
<div class="a" style="left:626px;top:857px;width:216px;height:123px;border:1px solid #dcdcdc;box-shadow:inset 1px 1px 0 #fff,1px 1px 0 #fff"></div>
<div class="lbl" style="left:634px;top:852px;padding:0 3px;background:#f0f0f0;color:#1414ff;font-size:10.5px">Criterio di definizione delle zone rigide</div>
<div class="rad" style="left:635px;top:871px"></div><div class="a" style="left:639px;top:875px;width:4px;height:4px;border-radius:50%;background:#000"></div>
<div class="rad" style="left:635px;top:891px"></div>
<div class="rad" style="left:635px;top:911px"></div>
<div class="rad" style="left:635px;top:931px"></div>
<div class="lbl" style="left:651px;top:872px">da diffusione a 30°</div>
<div class="lbl" style="left:651px;top:892px">ai nodi maschi-fasce</div>
<div class="lbl" style="left:651px;top:912px">nulle</div>
<div class="lbl" style="left:651px;top:932px">personalizzate</div>
<div class="chk" style="left:634px;top:959px"></div>
<div class="lbl" style="left:652px;top:960px">&lt;= (1/3) H</div>
<div class="chk" style="left:858px;top:857px"></div>
<div class="lbl" style="left:876px;top:851px;line-height:13px;font-size:10.5px">Assemblaggio rigidezza di maschi
contigui</div>
<div class="lbl" style="left:857px;top:884px;line-height:13px;font-size:10.5px">L'assemblaggio riguarda maschi contigui
distinti per varie cause [geometria,
materiali, vincoli, carichi]. Le zone rigide
possono essere assimilate a quella del
'maschio' complessivo corrispondente
all'assemblaggio ('Dati Maschi' per la
gestione delle zone rigide)</div>
<!-- right frame panel bottom-right -->
<div class="a" style="left:1844px;top:835px;width:26px;height:177px;border-right:1px solid #6d6d6d"></div>

<style>
.gc{position:absolute;font-size:11px;text-align:center;white-space:pre;line-height:13px;border-right:1px solid #a0a0a0;border-bottom:1px solid #a0a0a0}
</style>
<div class="win" style="left:1218px;top:801px;width:625px;height:186px;border-color:#555;border-radius:7px 7px 0 0">
  <div class="tt" style="height:30px;background:linear-gradient(#bccde0,#c9d8ea 50%,#d6e3f1)"></div>
  <div class="t ttl" style="left:33px;top:13px;font-size:11.8px">Parete:  Stato di Progetto:  Dati Aperture e Fasce (1)</div>
  <div class="cbtn" style="left:518px;top:10px"><div class="a" style="left:10px;top:8px;width:10px;height:4px;border:1px solid #555;background:#eee;border-radius:1px"></div></div>
  <div class="cbtn" style="left:551px;top:10px"><div class="a" style="left:9px;top:3px;width:11px;height:9px;border:1px solid #555;background:#eee"></div><div class="a" style="left:12px;top:6px;width:5px;height:3px;border:1px solid #555"></div></div>
  <div class="cbtn" style="left:584px;top:10px"><svg width="28" height="15" style="position:absolute;left:0;top:0"><path d="M10,3l8,8M18,3l-8,8" stroke="#555" stroke-width="3"/><path d="M10,3l8,8M18,3l-8,8" stroke="#eee" stroke-width="1.5"/></svg></div>
  <div class="a" style="left:7px;top:29px;width:610px;height:149px;background:#f0f0f0"></div>
</div>
<svg class="a" style="left:1228px;top:811px" width="17" height="17"><rect x="0.5" y="0.5" width="16" height="16" fill="#808080" stroke="#000"/><rect x="5.5" y="7.5" width="6" height="9" fill="#fff" stroke="#000"/><rect x="5" y="1" width="7" height="6" fill="#00ff00"/></svg>
<!-- toolbar -->
<svg class="a" style="left:1226px;top:831px" width="260" height="22">
 <path d="M5,6l10,10M15,6l-10,10" stroke="#000" stroke-width="2.2"/>
 <rect x="48" y="3" width="17" height="16" fill="#008000"/><path d="M61,6v7h-9M55,10l-3,3l3,3" stroke="#fff" stroke-width="2" fill="none"/>
 <path d="M95,4h3v12h-3M98,10h8" stroke="#000" fill="none"/><rect x="103" y="11" width="6" height="4" fill="#00c000"/>
 <path d="M117,4h3v12h-3M120,10h8" stroke="#000" fill="none"/><rect x="125" y="8" width="6" height="4" fill="#00c000"/>
 <rect x="138" y="7" width="10" height="6" fill="#e00000" stroke="#000" stroke-width=".6"/><path d="M148,10h7M152,7l3,3l-3,3" stroke="#000" fill="none"/>
 <rect x="186.5" y="3.5" width="17" height="14" fill="#f8f8f8" stroke="#bbb"/><path d="M188,9h14M191,6l-3,3l3,3M199,6l3,3l-3,3" stroke="#000" fill="none"/><text x="193" y="15" font-size="7" fill="#00f" font-family="Liberation Sans">x</text>
 <path d="M232,10h16M236,7l-4,3l4,3M244,7l4,3l-4,3" stroke="#000" fill="none"/><rect x="238" y="4" width="4" height="13" fill="#d00000"/>
</svg>
<!-- grid -->
<div class="a" style="left:1227px;top:853px;width:607px;height:125px;background:#f0f0f0;border-top:1px solid #a0a0a0;border-left:1px solid #a0a0a0"></div>
<div class="gc" style="left:1228px;top:854px;width:59px;height:33px;background:#dcdcdc;padding-top:10px">N°</div>
<div class="a" style="left:1287px;top:854px;width:3px;height:107px;background:#000"></div>
<div class="gc" style="left:1290px;top:854px;width:36px;height:33px;background:#f0f0f0"></div>
<div class="gc" style="left:1326px;top:854px;width:60px;height:33px;background:#ffff00;padding-top:3px;line-height:15px">d
(mm)</div>
<div class="gc" style="left:1386px;top:854px;width:60px;height:33px;background:#ffff00;padding-top:3px;line-height:15px">z
(mm)</div>
<div class="gc" style="left:1446px;top:854px;width:60px;height:33px;background:#ffff00;padding-top:3px;line-height:15px">B
(mm)</div>
<div class="gc" style="left:1506px;top:854px;width:60px;height:33px;background:#ffff00;padding-top:3px;line-height:15px">H
(mm)</div>
<div class="gc" style="left:1566px;top:854px;width:60px;height:33px;background:#e0e0e0;padding-top:10px">N°cerch.</div>
<div class="gc" style="left:1626px;top:854px;width:80px;height:33px;background:#80ff80;padding-top:3px;line-height:15px">Fascia:
mur.sx</div>
<div class="gc" style="left:1706px;top:854px;width:80px;height:33px;background:#80ff80;padding-top:18px">mur.dx</div>
<div class="gc" style="left:1786px;top:854px;width:48px;height:33px;background:#ffb482;padding-top:3px;line-height:15px;text-align:left;padding-left:13px;overflow:hidden;border-right:none">Pressc
Comp</div>
<!-- row -->
<div class="gc" style="left:1228px;top:887px;width:59px;height:19px;background:#fff;padding-top:3px">1</div>
<div class="gc" style="left:1290px;top:887px;width:36px;height:19px;background:#f0f0f0;border-bottom:1px solid #000;border-right:1px solid #000"><svg width="10" height="12" style="position:absolute;left:14px;top:3px"><path d="M1,0l7,6l-7,6z" fill="#000"/></svg></div>
<div class="gc" style="left:1326px;top:887px;width:60px;height:19px;background:#ffff99;padding-top:1px;border:2px solid #000">1300</div>
<div class="gc" style="left:1386px;top:887px;width:60px;height:19px;background:#ffffaa;padding-top:3px">0</div>
<div class="gc" style="left:1446px;top:887px;width:60px;height:19px;background:#dcdcdc;padding-top:3px">1100</div>
<div class="gc" style="left:1506px;top:887px;width:60px;height:19px;background:#dcdcdc;padding-top:3px">2100</div>
<div class="gc" style="left:1566px;top:887px;width:60px;height:19px;background:#fff;padding-top:3px">1</div>
<div class="gc" style="left:1626px;top:887px;width:80px;height:19px;background:#c8ffc8"></div>
<div class="gc" style="left:1706px;top:887px;width:80px;height:19px;background:#c8ffc8"></div>
<div class="gc" style="left:1786px;top:887px;width:48px;height:19px;background:#ffdcc0;border-right:none"></div>
<div class="a" style="left:1659px;top:889px;width:13px;height:13px;background:#00d000;border:1px solid #000"><svg width="11" height="11" style="position:absolute;left:0;top:0"><path d="M2,5l3,3l5,-6" stroke="#000" stroke-width="1.8" fill="none"/></svg></div>
<div class="a" style="left:1739px;top:889px;width:13px;height:13px;background:#f00;border:1px solid #000"></div>
<div class="a" style="left:1818px;top:889px;width:13px;height:13px;background:#f00;border:1px solid #000"></div>
<!-- left empty N° column -->
<div class="a" style="left:1228px;top:906px;width:59px;height:55px;background:#f0f0f0;border-right:1px solid #a0a0a0"></div>
<!-- h scrollbar -->
<div class="a" style="left:1228px;top:961px;width:62px;height:17px;background:#c8c8c8"></div>
<div class="a" style="left:1290px;top:961px;width:543px;height:17px;background:#f4f4f4"></div>
<div class="a" style="left:1290px;top:961px;width:16px;height:17px;background:#f0f0f0;border:1px solid #e0e0e0"><svg width="14" height="15" style="position:absolute;left:0;top:0"><path d="M9,4l-4,4l4,4z" fill="#000"/></svg></div>
<div class="a" style="left:1307px;top:961px;width:42px;height:17px;background:#fff;border:1px solid #c0c0c0;border-right-color:#6d6d6d;border-bottom-color:#6d6d6d"></div>
<div class="a" style="left:1817px;top:961px;width:16px;height:17px;background:#f0f0f0;border:1px solid #e0e0e0"><svg width="14" height="15" style="position:absolute;left:0;top:0"><path d="M5,4l4,4l-4,4z" fill="#000"/></svg></div>

<!-- right toolbar -->
<div id="rtb" class="a"></div>

<svg class="a" style="left:0;top:0" width="1920" height="70" font-family="Liberation Sans">
<!-- title app icon -->
<g transform="translate(2,2)"><rect x="0" y="0" width="18" height="17" fill="#fff"/><path d="M1,1h16v15h-16z" fill="none" stroke="#f00" stroke-width="2" stroke-dasharray="2,2"/><rect x="4" y="4" width="10" height="9" fill="#00f"/><rect x="6" y="5" width="6" height="7" fill="#ff0" stroke="#000" stroke-width=".6"/></g>
<!-- title button glyphs -->
<rect x="1832.5" y="10.5" width="10" height="4" rx="1" fill="#eee" stroke="#444"/>
<g fill="#eee" stroke="#444"><rect x="1867.5" y="5.5" width="9" height="7" rx="1"/><rect x="1863.5" y="8.5" width="9" height="7" rx="1"/></g>
<path d="M1897,6l8,8M1905,6l-8,8" stroke="#444" stroke-width="3.2"/><path d="M1897,6l8,8M1905,6l-8,8" stroke="#eee" stroke-width="1.6"/>
<g transform="translate(0,46)">
 <!-- tree -->
 <g transform="translate(27,0)" stroke="#000" fill="none"><path d="M2,1v14M2,4h4M2,8h4M2,12h4M7,2h6M8,6h6M8,10h6M8,14h6"/><circle cx="2" cy="1.5" r="1.3" fill="#ff0"/><circle cx="5" cy="6" r="1.3" fill="#ff0"/><circle cx="5" cy="10" r="1.3" fill="#ff0"/><circle cx="6" cy="14" r="1.3" fill="#ff0"/></g>
 <!-- new doc gray -->
 <path transform="translate(75,0)" d="M1.5,1.5h8l3,3v11h-11z" fill="#f8f8f8" stroke="#b0b0b0"/>
 <!-- open gray -->
 <g transform="translate(96,0)"><path d="M1,5h5l1,1h6v9h-12z" fill="#c8c8c8" stroke="#a0a0a0"/><path d="M3,15l3,-6h10l-3,6z" fill="#a8a8a8"/><path d="M9,3c2,-2 4,-2 6,1" stroke="#a0a0a0" fill="none"/></g>
 <!-- save gray -->
 <g transform="translate(120,0)"><rect x="1" y="1" width="14" height="15" fill="#9a9a9a"/><rect x="4" y="2" width="8" height="5" fill="#e8e8e8"/><rect x="5" y="10" width="6" height="5" fill="#e8e8e8"/></g>
 <!-- print gray -->
 <g transform="translate(164,0)"><rect x="5" y="2" width="8" height="6" fill="#f0f0f0" stroke="#a0a0a0"/><rect x="1" y="8" width="16" height="7" rx="2" fill="#9a9a9a"/></g>
 <!-- magnifiers -->
 <g stroke="#000" fill="none" stroke-width="1.5">
  <g transform="translate(211,0)"><circle cx="7" cy="7" r="6" fill="#fff"/><path d="M11,11l4,4" stroke-width="2.5"/><rect x="4" y="5" width="6" height="4" stroke="#a00" stroke-width="1"/></g>
  <g transform="translate(234,0)"><circle cx="7" cy="7" r="6" fill="#fff"/><path d="M11,11l4,4" stroke-width="2.5"/><path d="M4,10l6,-6" stroke-width="2.5"/><path d="M4,10v-4M4,10h4" stroke-width="1.5"/></g>
  <g transform="translate(257,0)"><circle cx="7" cy="7" r="6" fill="#fff"/><path d="M11,11l4,4" stroke-width="2.5"/><path d="M4,7h6M7,4v6" stroke="#a00" stroke-width="2"/></g>
  <g transform="translate(280,0)"><circle cx="7" cy="7" r="6" fill="#fff"/><path d="M11,11l4,4" stroke-width="2.5"/><path d="M4,7h6" stroke="#a00" stroke-width="2"/></g>
  <g transform="translate(303,0)"><circle cx="7" cy="7" r="6" fill="#fff"/><path d="M11,11l4,4" stroke-width="2.5"/><path d="M2,7h10M7,2v10" stroke="#a00" stroke-width="1"/></g>
 </g>
 <!-- hands -->
 <g transform="translate(326,0)" fill="#fff" stroke="#000" stroke-width="1.1"><path d="M2,9l4,-7l2,1l-2,4l4,-6l2,1l-3,5l4,-4l2,1l-3,4l3,-2l2,1l-3,4l1,3l-2,2h-6l-4,-3z"/><path d="M12,14l3,2" stroke="#888"/></g>
 <g transform="translate(349,0)"><path d="M1,10l4,-7l2,1l-2,4l4,-6l2,1l-3,5l4,-4l2,1l-3,4l3,-2l2,1l-3,4l1,3l-2,2h-6l-4,-3z" fill="#fff" stroke="#000" stroke-width="1.1"/><path d="M15,0v3M13,3h5" stroke="#e00" stroke-width="1.2"/></g>
 <path transform="translate(372,0)" d="M2,15l12,-12M10,3h4v4M2,11v4h4" stroke="#b0b0b0" fill="none" stroke-width="1.5"/>
 <g transform="translate(395,0)" stroke="#000" stroke-width="1.8" fill="none"><path d="M8,1v15M1,9h14"/><path d="M5,4l3,-3l3,3M5,13l3,3l3,-3M4,6l-3,3l3,3M12,6l3,3l-3,3"/><path d="M14,0v3M12,3h5" stroke="#e00" stroke-width="1.2"/></g>
 <!-- nav arrows gray -->
 <g fill="#9a9a9a">
  <g transform="translate(440,0)"><rect x="1" y="1" width="2" height="14"/><path d="M3,8l7,-7v4h7v6h-7v4z"/></g>
  <path transform="translate(464,0)" d="M1,8l7,-7v4h8v6h-8v4z"/>
  <path transform="translate(486,0)" d="M16,8l-7,-7v4h-8v6h8v4z"/>
  <g transform="translate(509,0)"><rect x="14" y="1" width="2" height="14"/><path d="M14,8l-7,-7v4h-7v6h7v4z"/></g>
 </g>
 <path transform="translate(534,0)" d="M3,6h8a3.5,3.5 0 0 1 0,7h-2M5,3l-3,3l3,3" stroke="#a8a8a8" fill="none" stroke-width="1.4"/>
 <!-- home -->
 <g transform="translate(555,0)"><path d="M1,8l7,-7l7,7" fill="none" stroke="#000" stroke-width="2"/><path d="M2,8l6,-6l6,6" fill="none" stroke="#ff0" stroke-width="1"/><path d="M3,8v8h10v-8" fill="#fff" stroke="#000" stroke-width="1.5"/><rect x="6.5" y="11" width="3" height="5" fill="#ff0" stroke="#000"/><rect x="12" y="2" width="2" height="4" fill="#c00"/></g>
 <!-- blue square -->
 <g transform="translate(579,0)"><rect x="1" y="1" width="15" height="15" fill="none" stroke="#f00" stroke-dasharray="1,2"/><rect x="2.5" y="2.5" width="12" height="12" fill="#00ffff" stroke="#00f" stroke-width="2"/><rect x="5" y="5" width="7" height="9" fill="#fff"/></g>
 <!-- green window -->
 <g transform="translate(602,0)"><rect x="0.5" y="0.5" width="16" height="15" fill="#00ff00" stroke="#000"/><rect x="3" y="6" width="5" height="10" fill="#fff" stroke="#000" stroke-width=".8"/><rect x="10" y="4" width="4" height="4" fill="#fff" stroke="#000" stroke-width=".8"/></g>
 <!-- brick -->
 <g transform="translate(624,0)" fill="#d00000"><rect x="1" y="1" width="16" height="2.5"/><rect x="1" y="5" width="16" height="2.5"/><rect x="1" y="9" width="16" height="2.5"/><rect x="1" y="13" width="16" height="2.5"/><path d="M6,1v2.5M11,5v2.5M6,9v2.5M11,13v2.5" stroke="#fff"/></g>
 <!-- H -->
 <g transform="translate(647,0)" fill="#0000d0"><rect x="1" y="1" width="4" height="15"/><rect x="13" y="1" width="4" height="15"/><rect x="4" y="7" width="10" height="3"/></g>
 <!-- notepad -->
 <g transform="translate(670,0)"><rect x="1.5" y="1.5" width="13" height="15" fill="#fff" stroke="#000"/><path d="M3,5h9M3,8h9M3,11h9M3,14h9" stroke="#999"/><path d="M9,13l6,-10" stroke="#0000d0" stroke-width="2"/></g>
 <!-- gray group -->
 <g stroke="#a8a8a8" fill="none" stroke-width="1.5">
  <g transform="translate(717,0)"><rect x="1" y="1" width="8" height="11"/><path d="M3,4h4M3,7h4M3,10h4M16,12a3,3 0 1 0 0,2"/></g>
  <g transform="translate(739,0)"><path d="M2,15l2,-14h5l-2,14zM9,15l2,-14h5l-2,14z" fill="#b0b0b0" stroke="none"/></g>
  <g transform="translate(762,0)"><rect x="1.5" y="1.5" width="14" height="14"/><path d="M4,14l4,-12"/></g>
 </g>
 <!-- doc P -->
 <g transform="translate(809,0)"><rect x="1.5" y="1.5" width="9" height="12" fill="#fff" stroke="#000"/><path d="M3,4h6M3,7h6M3,10h6" stroke="#000"/><text x="10" y="17" font-size="11" font-weight="bold" fill="#f00">P</text></g>
 <!-- chart -->
 <g transform="translate(831,0)"><path d="M3,1v15h14" stroke="#000" fill="none"/><path d="M4,15l4,-8h8v8z" fill="#ffff80"/><path d="M4,15l4,-9h9" stroke="#00a000" fill="none" stroke-width="1.5"/><path d="M4,15l4,-6h9" stroke="#f00" fill="none" stroke-width="1.2"/></g>
 <!-- copy pale -->
 <g transform="translate(879,0)"><rect x="1.5" y="1.5" width="9" height="11" fill="#f0f4fa" stroke="#a0b0c8"/><rect x="5.5" y="4.5" width="9" height="11" fill="#f8fafd" stroke="#a0b0c8"/></g>
 <path transform="translate(902,0)" d="M1,3h5v-2h4v2h2l3,3v10h-14z" fill="#a8a8a8"/>
 <!-- table -->
 <g transform="translate(924,0)"><rect x="0.5" y="0.5" width="13" height="9" fill="#fff" stroke="#000"/><rect x="1" y="1" width="12" height="2" fill="#000080"/><rect x="3.5" y="6.5" width="13" height="10" fill="#fff" stroke="#000"/><rect x="4" y="7" width="12" height="2" fill="#000080"/><path d="M4,12h12M8,9v7M12,9v7" stroke="#000" stroke-width=".7"/></g>
 <!-- paint -->
 <g transform="translate(947,0)"><rect x="0.5" y="1.5" width="14" height="15" fill="#fff" stroke="#000"/><circle cx="4" cy="11" r="3" fill="#00c000"/><rect x="5" y="3" width="5" height="6" fill="#e00"/><path d="M6,13l9,-11" stroke="#0000d0" stroke-width="2"/></g>
 <!-- DXF -->
 <g transform="translate(971,0)"><path d="M0.5,0.5h11l3,3v13h-14z" fill="#fff" stroke="#000"/><path d="M2,6h4M3,4l-2,2l2,2M13,6h-4M11,4l2,2l-2,2" stroke="#0000a0" fill="none"/><text x="1" y="15" font-size="6.5" font-weight="bold" fill="#0000a0">DXF</text></g>
 <rect x="993" y="0" width="1" height="16" fill="#a0a0a0"/>
 <!-- windows -->
 <g fill="#fff" stroke="#000">
  <g transform="translate(1000,-1)"><rect x="1.5" y="1.5" width="9" height="5"/><rect x="4.5" y="5.5" width="9" height="5"/><rect x="7.5" y="9.5" width="9" height="6"/><path d="M2,2h8M5,6h8M8,10h8" stroke="#00f" stroke-width="1.3"/></g>
  <g transform="translate(1024,-1)"><rect x="1.5" y="1.5" width="14" height="14"/><path d="M2,2.5h13M2,8.5h13" stroke="#00f" stroke-width="2"/><path d="M2,7.5h13" stroke="#000"/></g>
  <g transform="translate(1047,-1)"><rect x="1.5" y="1.5" width="14" height="14"/><path d="M2,2.5h13M2,10.5h13" stroke="#00f" stroke-width="2"/><path d="M8.5,2v8M2,11.5h13" stroke="#000"/></g>
  <g transform="translate(1070,-1)"><rect x="1.5" y="1.5" width="14" height="14" stroke="#a0a0a0"/><path d="M2,2.5h13" stroke="#a0a0a0" stroke-width="2"/><path d="M2,10.5h13" stroke="#00f" stroke-width="2"/><path d="M8.5,2v8M2,11.5h13" stroke="#000"/></g>
  <g transform="translate(1092,-1)"><rect x="1.5" y="1.5" width="14" height="14"/><path d="M2,2.5h13" stroke="#00f" stroke-width="2"/><path d="M8.5,5v9M6,7l2.5,-2.5l2.5,2.5M6,12l2.5,2.5l2.5,-2.5" fill="none"/></g>
  <g transform="translate(1116,-1)"><rect x="1.5" y="1.5" width="14" height="14"/><path d="M2,2.5h13" stroke="#00f" stroke-width="2"/><path d="M3,9.5h11M5,7l-2.5,2.5l2.5,2.5M12,7l2.5,2.5l-2.5,2.5" fill="none"/></g>
 </g>
 <text x="1164" y="15" font-size="16" font-weight="bold" fill="#900000">?</text>
 <g transform="translate(1185,0)"><path d="M1,1v12l3,-3l3,5l2,-1l-3,-5h4z" fill="#b0b0b0"/><text x="8" y="12" font-size="12" font-weight="bold" fill="#b0b0b0">?</text></g>
 <!-- youtube -->
 <g transform="translate(1231,0)"><rect x="0" y="0" width="16" height="17" fill="#f8f8f8"/><text x="8" y="7" font-size="7" font-weight="bold" text-anchor="middle" fill="#333">You</text><rect x="1" y="8" width="14" height="8" rx="2" fill="#d01010"/><text x="8" y="15" font-size="7" font-weight="bold" text-anchor="middle" fill="#fff">Tube</text></g>
</g>
<!-- normativa box -->
<rect x="1274.5" y="44.5" width="199" height="19" fill="#fff" stroke="#3c3c3c"/>
<text x="1286" y="58" font-size="11.3" fill="#0000c0" textLength="174" lengthAdjust="spacingAndGlyphs">DM 17.1.2018 e Circ.7 del 21.1.2019</text>
</svg>

<!-- chart window title icon & toolbar -->
<svg class="a" style="left:590px;top:70px" width="630" height="52" font-family="Liberation Sans">
 <rect x="10.5" y="8.5" width="15" height="15" fill="#000080"/><rect x="11.5" y="9.5" width="13" height="13" fill="#800000"/><rect x="13" y="11" width="10" height="10" fill="#00ffff"/><path d="M13,21l4,-6l3,4l3,-3v5z" fill="#c0c0c0"/><path d="M20,12l3,6h-5z" fill="#008000"/>
 <!-- separators -->
 <g fill="#a0a0a0"><rect x="11" y="30" width="1" height="18"/><rect x="65" y="30" width="1" height="18"/><rect x="96" y="30" width="1" height="18"/><rect x="197" y="30" width="1" height="18"/><rect x="228" y="30" width="1" height="18"/></g>
 <!-- folder open -->
 <g transform="translate(18,30)"><path d="M1,3h5l1,1h6v10h-12z" fill="#ffff80" stroke="#000"/><path d="M2,14l3,-6h11l-3,6z" fill="#808000" stroke="#000"/><path d="M9,2c2,-2 4,-2 6,1" stroke="#000" fill="none"/></g>
 <g transform="translate(41,30)"><rect x="1" y="6" width="13" height="8" fill="#808080" stroke="#000"/><path d="M3,6c0,-3 4,-3 4,0" stroke="#000" fill="none"/></g>
 <g transform="translate(72,30)"><rect x="1.5" y="1.5" width="9" height="11" fill="#f0f4fa" stroke="#a0b0c8"/><rect x="5.5" y="4.5" width="9" height="11" fill="#f8fafd" stroke="#a0b0c8"/></g>
 <!-- cyan arrows -->
 <g fill="#00ffff" stroke="#000">
  <g transform="translate(103,30)"><rect x="0" y="1" width="2" height="14" fill="#000" stroke="none"/><path d="M3.5,8l6,-6v3.5h6v5h-6v3.5z"/></g>
  <path transform="translate(126,30)" d="M1.5,8l6,-6v3.5h8v5h-8v3.5z"/>
  <path transform="translate(149,30)" d="M15.5,8l-6,-6v3.5h-8v5h8v3.5z"/>
  <g transform="translate(172,30)"><rect x="14" y="1" width="2" height="14" fill="#000" stroke="none"/><path d="M12.5,8l-6,-6v3.5h-6v5h6v3.5z"/></g>
 </g>
 <g transform="translate(203,30)"><text x="4" y="10" font-size="11" font-weight="bold" fill="#0000d0">S</text><path d="M2,9a6,6 0 0 0 6,7M14,8a6,6 0 0 0 -4,-6" stroke="#0000d0" fill="none"/></g>
 <rect x="232.5" y="29.5" width="46" height="13" fill="#fff" stroke="#a0a0a0"/><rect x="233" y="30" width="1" height="12" fill="#404040"/><rect x="233" y="30" width="45" height="1" fill="#404040"/>
 <text x="236" y="40" font-size="9">3</text>
 <text x="284" y="39" font-size="11" fill="#000080">2 / 2</text>
</svg>

<!-- window control glyphs for Parete n°1 & Chart & Risultati -->
<svg class="a" style="left:0;top:70px" width="1880" height="30">
 <g id="g1">
  <rect x="495.5" y="16.5" width="10" height="4" rx="1" fill="#eee" stroke="#555"/>
  <rect x="528.5" y="12.5" width="10" height="8" fill="#eee" stroke="#555"/><rect x="531.5" y="15.5" width="4" height="2" fill="none" stroke="#555"/>
  <path d="M561,12l8,7M569,12l-8,7" stroke="#555" stroke-width="3"/><path d="M561,12l8,7M569,12l-8,7" stroke="#eee" stroke-width="1.5"/>
 </g>
 <!-- chart window controls -->
 <rect x="1111.5" y="8.5" width="30" height="17" rx="3" fill="#c9d8ea" stroke="#8c9cb2"/>
 <rect x="1144.5" y="8.5" width="30" height="17" rx="3" fill="#c9d8ea" stroke="#8c9cb2"/>
 <rect x="1177.5" y="8.5" width="31" height="17" rx="3" fill="#c75050" stroke="#6b2020"/>
 <rect x="1122.5" y="16.5" width="10" height="4" rx="1" fill="#eee" stroke="#555"/>
 <rect x="1155.5" y="12.5" width="10" height="8" fill="#eee" stroke="#555"/><rect x="1158.5" y="15.5" width="4" height="2" fill="none" stroke="#555"/>
 <path d="M1189,13l8,7M1197,13l-8,7" stroke="#333" stroke-width="3.2"/><path d="M1189,13l8,7M1197,13l-8,7" stroke="#fff" stroke-width="1.8"/>
 <!-- risultati -->
 <g transform="translate(1291,0)">
  <rect x="495.5" y="16.5" width="10" height="4" rx="1" fill="#eee" stroke="#555"/>
  <rect x="528.5" y="12.5" width="10" height="8" fill="#eee" stroke="#555"/><rect x="531.5" y="15.5" width="4" height="2" fill="none" stroke="#555"/>
  <path d="M561,12l8,7M569,12l-8,7" stroke="#555" stroke-width="3"/><path d="M561,12l8,7M569,12l-8,7" stroke="#eee" stroke-width="1.5"/>
 </g>
 <!-- risultati icon -->
 <g transform="translate(1227,8)"><rect x="1" y="1" width="8" height="11" fill="#fff" stroke="#000" stroke-width="1.3"/><path d="M3,4h4M3,6h4M3,8h4M3,10h4" stroke="#000" stroke-width=".9"/><text x="8" y="17" font-size="11" font-weight="bold" fill="#f00" font-family="Liberation Sans">p</text></g>
</svg>
<!-- dati parete buttons glyphs -->
<svg class="a" style="left:1760px;top:788px" width="120" height="24">
 <rect x="54.5" y="7.5" width="9" height="7" fill="#eee" stroke="#555"/><rect x="56.5" y="9.5" width="5" height="3" fill="none" stroke="#555"/>
</svg>
<!-- right toolbar -->
<svg class="a" style="left:1880px;top:67px" width="40" height="955" font-family="Liberation Sans">
 <g transform="translate(4,3)"><path d="M2,15l14,-13l14,13" fill="none" stroke="#000" stroke-width="3.5"/><path d="M3,14l13,-11l13,11" fill="none" stroke="#ff0" stroke-width="1.5"/><path d="M6,15v15h20v-15" fill="#fff" stroke="#000" stroke-width="3"/><rect x="12" y="20" width="8" height="10" fill="#fff" stroke="#000" stroke-width="3"/><rect x="23" y="4" width="3" height="8" fill="#c00"/></g>
 <g transform="translate(5,42)"><rect x="1" y="1" width="28" height="28" fill="none" stroke="#f00" stroke-dasharray="1.5,2" stroke-width="2"/><rect x="5" y="5" width="20" height="20" fill="#ffff00" stroke="#0000ff" stroke-width="4"/><rect x="9" y="8" width="10" height="12" fill="#ffff00"/></g>
 <g transform="translate(5,79)"><rect x="1" y="1" width="29" height="29" fill="#00ff00" stroke="#000" stroke-width="2"/><rect x="6" y="12" width="8" height="17" fill="#fff" stroke="#000" stroke-width="1.5"/><rect x="18" y="9" width="7" height="7" fill="#fff" stroke="#000" stroke-width="1.5"/></g>
 <rect x="3" y="126" width="34" height="1" fill="#c8c8c8"/>
 <g transform="translate(6,143)"><path d="M1,1h14l5,5v17h-19z" fill="#eef3fa" stroke="#5070a0"/><path d="M9,8h14l5,5v17h-19z" fill="#fff" stroke="#203060"/><path d="M11,16h14M11,19h14M11,22h14M11,25h14" stroke="#b0c0d8"/></g>
 <g transform="translate(6,182)" fill="#a8a8a8"><path d="M1,6h6v-3h5v3h2v23h-13z"/><path d="M11,10h11l5,5v16h-16z" stroke="#f0f0f0" stroke-width="1.5"/></g>
 <rect x="3" y="230" width="34" height="1" fill="#c8c8c8"/>
 <path transform="translate(6,251)" d="M2,10l11,-9v5h16v8h-16v5z" fill="#a8a8a8"/>
 <path transform="translate(6,288)" d="M28,10l-11,-9v5h-16v8h16v5z" fill="#a8a8a8"/>
 <rect x="3" y="333" width="34" height="1" fill="#c8c8c8"/>
 <path transform="translate(6,350)" d="M1,4l4,-3h18v30h-22z" fill="#a8a8a8"/>
 <g transform="translate(5,388)" fill="#a8a8a8"><path d="M1,1h29v6h-3l-3,24h-5l3,-24h-4l-3,24h-5l3,-24h-4l-3,24h-5z"/></g>
 <g transform="translate(5,426)" stroke="#a8a8a8" fill="none" stroke-width="2"><path d="M3,3v28h27M3,3h26v28" stroke-dasharray="3,2"/><path d="M8,30l6,-27"/><path d="M1,6l2,-4l2,4M27,28l4,3l-4,3" stroke-width="1.5"/></g>
 <rect x="3" y="473" width="34" height="1" fill="#c8c8c8"/>
 <g transform="translate(8,490)"><path d="M1,1h16l5,5v25h-21z" fill="#fff" stroke="#8090b0"/><path d="M3,8h14M3,11h14M3,14h14" stroke="#c8d0e0"/><text x="8" y="27" font-size="14" font-weight="bold" fill="#e00000">P</text></g>
 <g transform="translate(4,527)"><path d="M4,1v31h29" stroke="#000" fill="none" stroke-width="1.4"/><path d="M2,5l2,-4l2,4M29,30l4,2l-4,2" stroke="#000" fill="none"/><path d="M6,30l8,-12h16v12z" fill="#ffff80"/><path d="M5,30l9,-13h16" stroke="#00a000" fill="none" stroke-width="2.5"/><path d="M6,31l8,-9h16" stroke="#f00" fill="none" stroke-width="2"/></g>
 <rect x="3" y="576" width="34" height="1" fill="#c8c8c8"/>
 <g transform="translate(4,595)" fill="#a8a8a8"><rect x="10" y="1" width="12" height="12" fill="#f0f0f0" stroke="#a8a8a8" stroke-width="1.5"/><rect x="1" y="12" width="31" height="14" rx="3"/></g>
 <g transform="translate(4,630)"><rect x="0" y="0" width="33" height="33" fill="#fafafa"/><text x="16.5" y="14" font-size="13" font-weight="bold" text-anchor="middle" fill="#222" textLength="20" lengthAdjust="spacingAndGlyphs">You</text><rect x="3" y="15" width="27" height="17" rx="4" fill="#d01010"/><text x="16.5" y="29" font-size="13" font-weight="bold" text-anchor="middle" fill="#fff" textLength="23" lengthAdjust="spacingAndGlyphs">Tube</text></g>
</svg>

<!-- status -->
<div id="status" class="a"><div class="t" style="left:11px;top:5px;font-size:10.3px">PARETE n° 1 : VERIFICA DI RIPARAZIONE LOCALE SODDISFATTA</div></div>
</body></html>
